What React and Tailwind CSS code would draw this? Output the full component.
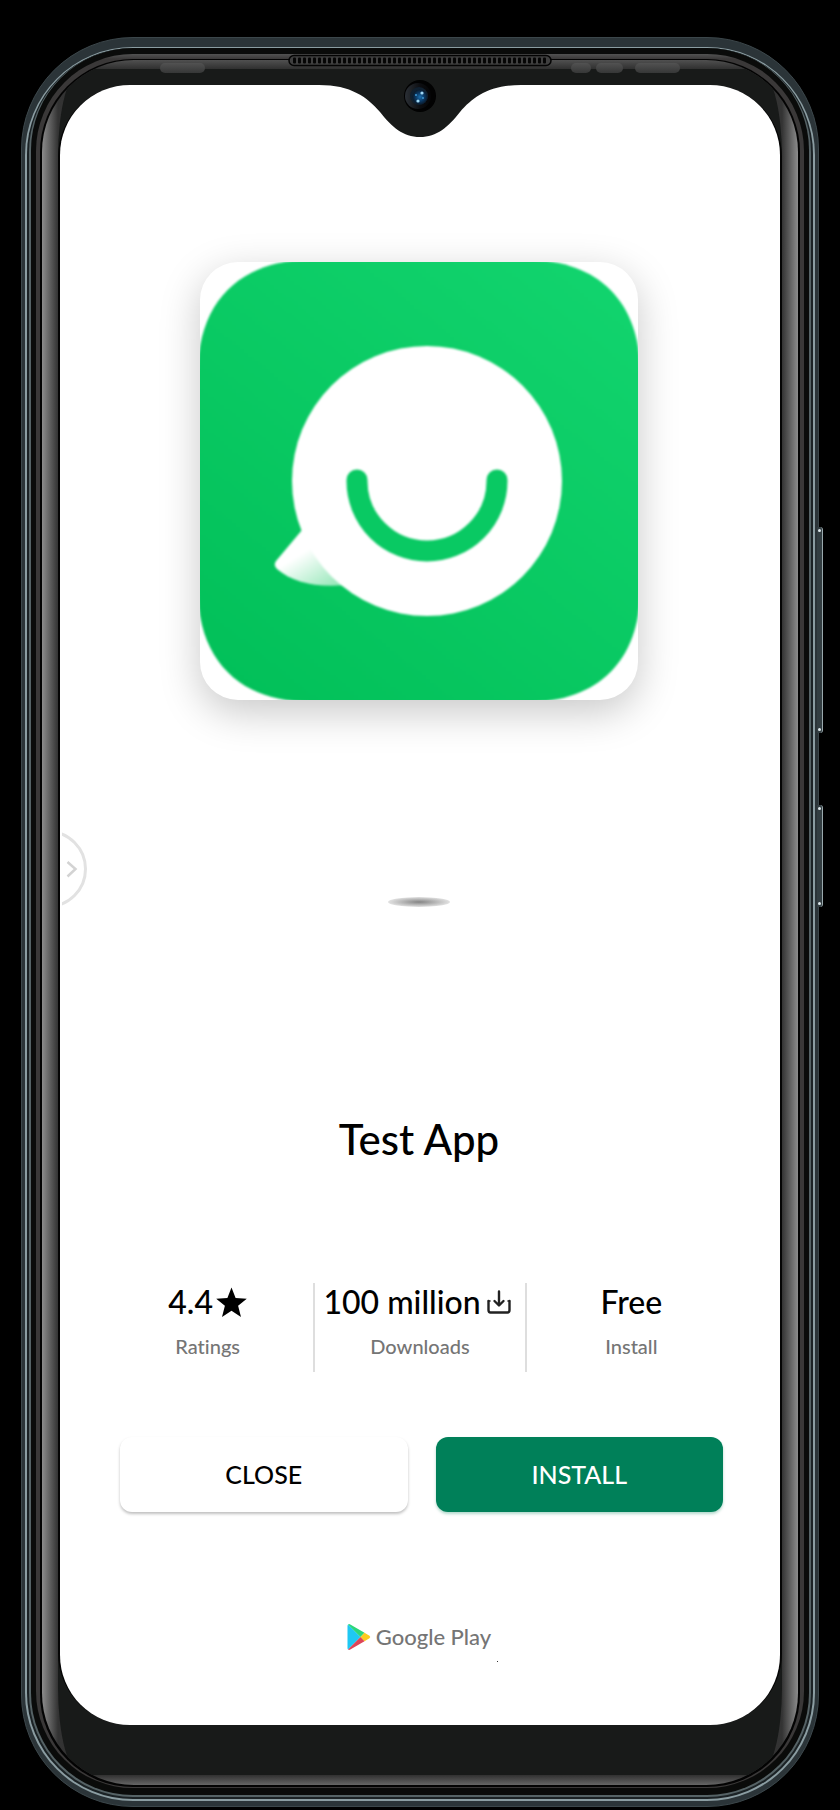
import React from "react";

const SPEAKER_HOLES = Array.from({ length: 51 }, (_, i) => 133 + i * 5);

function BezelHardware() {
  return (
    <svg
      className="absolute top-[16px] left-1/2 h-[22px] w-[520px] -translate-x-1/2"
      viewBox="0 0 520 22"
      aria-hidden="true"
    >
      <defs>
        <linearGradient id="sensor" x1="0" y1="0" x2="0" y2="1">
          <stop offset="0" stopColor="#525252" />
          <stop offset="1" stopColor="#363737" />
        </linearGradient>
      </defs>
      <g fill="url(#sensor)">
        <rect x="0" y="9" width="45" height="10" rx="5" />
        <rect x="411" y="9" width="20" height="10" rx="5" />
        <rect x="436" y="9" width="27" height="10" rx="5" />
        <rect x="475" y="9" width="45" height="10" rx="5" />
      </g>
      <rect x="129" y="1.5" width="262" height="10" rx="5" fill="#3f3f3f" stroke="#030303" strokeWidth="1.5" />
      {SPEAKER_HOLES.map((x) => (
        <rect key={x} x={x} y="3.5" width="3" height="6" rx="1" fill="#050505" />
      ))}
    </svg>
  );
}

function Notch() {
  return (
    <svg
      className="absolute -top-px left-1/2 h-[54px] w-[202px] -translate-x-1/2"
      viewBox="0 -1 202 54"
      overflow="visible"
      aria-hidden="true"
    >
      <defs>
        <radialGradient id="lens">
          <stop offset="0" stopColor="#1c6fae" />
          <stop offset="0.55" stopColor="#0b3a66" />
          <stop offset="1" stopColor="#0a1a2b" />
        </radialGradient>
        <linearGradient id="ring" x1="0" x2="1">
          <stop offset="0" stopColor="#2b3036" />
          <stop offset="0.6" stopColor="#0c0d10" />
          <stop offset="1" stopColor="#050506" />
        </linearGradient>
      </defs>
      <path
        d="M0 -1 V0 C32 0 48 12 61 27 C73 42 84 52 101 52 C118 52 129 42 141 27 C154 12 170 0 202 0 V-1 Z"
        fill="#181a19"
      />
      <circle cx="101" cy="11" r="16" fill="#020202" />
      <circle cx="99" cy="11" r="13" fill="url(#ring)" />
      <circle cx="100" cy="11" r="9" fill="#10202f" />
      <circle cx="101" cy="12" r="7.5" fill="url(#lens)" />
      <circle cx="103" cy="8" r="1.6" fill="#9fd8f5" />
      <circle cx="99" cy="16" r="1.6" fill="#9fd8f5" />
      <circle cx="97" cy="10" r="1" fill="#3f9bd6" />
      <circle cx="104" cy="13" r="0.9" fill="#3f9bd6" />
    </svg>
  );
}

function SideKey({ className }) {
  return (
    <div
      className={
        "absolute -right-[5px] flex w-[6px] flex-col items-center justify-between rounded-r-[3px] border-r border-[#9aa9ad] bg-[#333e42] py-[2px] " +
        className
      }
    >
      <span className="size-[3px] rounded-full bg-[#dfe9ec]" />
      <span className="size-[3px] rounded-full bg-[#dfe9ec]" />
    </div>
  );
}

function PhoneFrame({ children }) {
  return (
    <div className="relative w-full max-w-[798px] rounded-[112px] border border-[#3c474b] bg-[#2b3438] px-[3px] pt-[9px] pb-[5px]">
      <SideKey className="top-[489px] h-[206px]" />
      <SideKey className="top-[767px] h-[102px]" />
      <div className="rounded-[108px] bg-[#8b9da2] px-[2px] pt-px pb-[2px]">
        <div className="rounded-[106px] bg-[#1b2225] px-[2px] pb-[2px]">
          <div className="rounded-[104px] bg-[#556265] px-[2px] pb-[2px]">
            <div className="rounded-[102px] bg-[#0a0b0a] px-[5px] pt-[6px] pb-[7px]">
              <div className="rounded-[97px] bg-[linear-gradient(to_bottom,#525252,#3a3838_5px)] px-[4px] pt-[5px] pb-px">
                <div className="rounded-[93px] bg-[#030303] px-[2px] pt-px pb-[2px]">
                  <div className="overflow-hidden rounded-[92px] bg-[linear-gradient(to_right,#8c8c8c,#333_16px,transparent_60px,transparent_calc(100%-60px),#333_calc(100%-16px),#8c8c8c),linear-gradient(to_bottom,#505050,#303030_9px,#303030_calc(100%-10px),#666)] px-[16px] pt-[9px] pb-[10px]">
                    <div className="rounded-[24px/88px] bg-[#181a19] pt-[16px] pb-[50px]">
                      <div className="rounded-[72px] bg-[#050505] px-[2px]">
                        <main className="relative rounded-[70px] bg-white">
                          <Notch />
                          {children}
                        </main>
                      </div>
                    </div>
                  </div>
                </div>
              </div>
            </div>
          </div>
        </div>
      </div>
      <BezelHardware />
    </div>
  );
}

function AppIcon() {
  return (
    <div className="w-[438px] max-w-full overflow-hidden rounded-[38px] bg-white shadow-[0_12px_40px_rgba(0,0,0,0.22)]">
      <svg className="block h-auto w-full" viewBox="0 0 438 438" role="img" aria-label="Test App icon">
        <defs>
          <linearGradient id="tile" x1="0.1" y1="1" x2="0.9" y2="0">
            <stop offset="0" stopColor="#02c059" />
            <stop offset="1" stopColor="#12d46e" />
          </linearGradient>
          <linearGradient id="tail" gradientUnits="userSpaceOnUse" x1="104" y1="290" x2="130" y2="332">
            <stop offset="0" stopColor="#fff" />
            <stop offset="1" stopColor="#8fe5b4" />
          </linearGradient>
          <filter id="soft" x="-2%" y="-2%" width="104%" height="104%" colorInterpolationFilters="sRGB">
            <feGaussianBlur stdDeviation="1" />
          </filter>
        </defs>
        <g filter="url(#soft)">
          <path
            d="M110 -2 H328 C398 -2 440 40 440 110 V328 C440 398 398 440 328 440 H110 C40 440 -2 398 -2 328 V110 C-2 40 40 -2 110 -2 Z"
            fill="url(#tile)"
          />
          <path
            d="M102 268 L76 299 Q73 303 77 307 C92 320 116 326 146 323 L160 300 L120 250 Z"
            fill="url(#tail)"
          />
          <circle cx="227" cy="219" r="135" fill="#fff" />
          <path
            d="M157 218 V219 A70 70 0 0 0 297 219 V218"
            fill="none"
            stroke="#09c963"
            strokeWidth="21"
            strokeLinecap="round"
          />
        </g>
      </svg>
    </div>
  );
}

function StarIcon() {
  return (
    <svg className="size-[31px]" viewBox="0 0 31 31" aria-hidden="true">
      <path
        d="M15.5 0.5 L19.6 11 L30.8 11.7 L22.1 18.8 L25 30 L15.5 23.8 L6 30 L8.9 18.8 L0.2 11.7 L11.4 11 Z"
        fill="#000"
      />
    </svg>
  );
}

function DownloadIcon() {
  return (
    <svg
      className="mr-[6px] ml-[3px] size-[24px]"
      viewBox="0 0 24 24"
      fill="none"
      stroke="#222"
      strokeWidth="2.4"
      strokeLinecap="round"
      strokeLinejoin="round"
      aria-hidden="true"
    >
      <path d="M12 1.5 V15 M7.5 11 L12 15.5 L16.5 11" />
      <path d="M1.5 11 V20 Q1.5 22.500 3.5 22.500 H20.5 Q22.5 22.500 22.5 20 V11" />
      <path d="M1.5 11 H3 M21 11 H22.5" strokeWidth="1.6" />
    </svg>
  );
}

function PlayLogo() {
  return (
    <svg className="h-[28px] w-[24px]" viewBox="0 0 24 28" aria-hidden="true">
      <path d="M1 1.5 L13.5 14 L1 26.5 Q0.5 26 0.5 25 V3 Q0.5 2 1 1.5 Z" fill="#1fc8f3" />
      <path d="M1 1.5 Q2 0.7 3.3 1.5 L17.5 9.8 L13.5 14 Z" fill="#2bd67b" />
      <path d="M17.5 9.8 L22.5 12.7 Q24 14 22.5 15.3 L17.5 18.2 L13.5 14 Z" fill="#fbcb1e" />
      <path d="M1 26.5 L13.5 14 L17.5 18.2 L3.3 26.5 Q2 27.3 1 26.5 Z" fill="#dd4557" />
    </svg>
  );
}

function Stat({ value, label, icon }) {
  return (
    <div className="flex h-[89px] flex-col items-center border-[#dedede] pt-px not-first:border-l-2">
      <dd className="order-1 flex h-[36px] items-center gap-[3px] text-[32px] whitespace-nowrap text-black">
        {value}
        {icon}
      </dd>
      <dt className="order-2 mt-[12px] text-[20px] leading-[28px] text-[#757575]">{label}</dt>
    </div>
  );
}

export default function App() {
  return (
    <div className="flex min-h-screen items-start justify-center bg-black px-[21px] pt-[37px] font-['Lato','Open_Sans',sans-serif] font-medium [font-variant-ligatures:none]">
      <PhoneFrame>
        <button type="button" aria-label="Open side panel" className="absolute top-[746px] left-[2px]">
          <svg className="block h-[76px] w-[26px]" viewBox="0 0 26 76" fill="none" aria-hidden="true">
            <circle cx="-14" cy="38" r="37.5" stroke="#e2e2e2" strokeWidth="3" />
            <path d="M5.5 31 L13.5 38 L5.5 45.5" stroke="#d3d3d3" strokeWidth="2.5" />
          </svg>
        </button>

        <div className="flex flex-col items-center pt-[177px] pr-[44px] pb-[63px] pl-[42px]">
          <AppIcon />
          <div className="mt-[197px] h-[10px] w-[62px] rounded-[50%] bg-[radial-gradient(closest-side,#848484,#e2e2e2)]" />
          <h1 className="mt-[208px] text-[42px] leading-[48px] text-black">Test App</h1>

          <dl className="mt-[120px] grid w-full grid-cols-3">
            <Stat value="4.4" label="Ratings" icon={<StarIcon />} />
            <Stat value="100 million" label="Downloads" icon={<DownloadIcon />} />
            <Stat value="Free" label="Install" />
          </dl>

          <div className="mt-[65px] grid w-full grid-cols-2 gap-[28px] pr-[13px] pl-[18px] text-[25px]">
            <button
              type="button"
              className="h-[75px] rounded-[12px] bg-white text-black shadow-[0_2px_3px_rgba(0,0,0,0.25)]"
            >
              CLOSE
            </button>
            <button
              type="button"
              className="h-[75px] rounded-[12px] bg-[#008059] text-white shadow-[0_2px_3px_rgba(0,128,89,0.3)]"
            >
              INSTALL
            </button>
          </div>

          <div className="mt-[111px] flex items-center gap-[5px] text-[22px] leading-[28px] text-[#757575]">
            <PlayLogo />
            <span>Google Play</span>
          </div>
          <span className="mt-[10px] ml-[157px] size-px bg-[#333]" />
        </div>
      </PhoneFrame>
    </div>
  );
}
